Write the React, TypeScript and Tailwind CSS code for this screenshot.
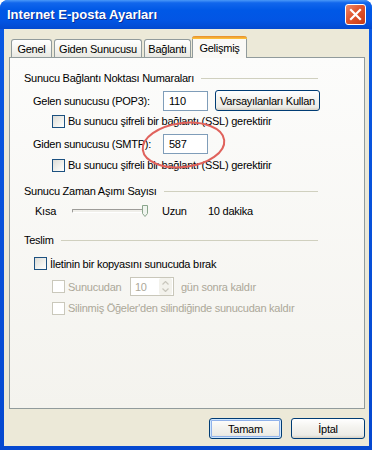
import React from "react";

function Checkbox({ disabled = false }: { disabled?: boolean }) {
  return (
    <div
      className={
        disabled
          ? "w-[13px] h-[13px] shrink-0 border border-[#CAC8BB] bg-white"
          : "w-[13px] h-[13px] shrink-0 border border-[#1C5180] bg-[linear-gradient(135deg,#DCDCD7_0%,#F2F2EE_60%,#FFFFFF_100%)]"
      }
    />
  );
}

function Header({ text }: { text: string }) {
  return (
    <div className="flex items-center h-[14px] w-[294px] gap-[7px]">
      <span className="whitespace-nowrap">{text}</span>
      <div className="flex-1 h-px bg-[#D0D0BF]" />
    </div>
  );
}

function Tab({ label, selected = false, w }: { label: string; selected?: boolean; w: string }) {
  if (selected) {
    return (
      <div
        className={`${w} h-[22px] -mx-[1px] relative bg-[#FAF9F6] border-x border-[#919B9C] rounded-t-[3px] flex justify-center pt-[3px]`}
      >
        <div className="absolute left-[-1px] right-[-1px] top-0 h-[3px] rounded-t-[3px] bg-[linear-gradient(to_bottom,#E68B2C,#FFC73C)]" />
        <span className="mt-[2px]">{label}</span>
      </div>
    );
  }
  return (
    <div
      className={`${w} h-[18px] mb-[1px] border border-b-0 border-[#919B9C] rounded-t-[3px] bg-[linear-gradient(to_bottom,#FFFFFF,#F3F3EF_60%,#E9E8E2)] flex items-center justify-center pt-[1px]`}
    >
      {label}
    </div>
  );
}

function XPButton({ label, def = false, w, className = "" }: { label: string; def?: boolean; w: string; className?: string }) {
  return (
    <div
      className={`${w} h-[21px] rounded-[3px] border border-[#003C74] bg-[linear-gradient(to_bottom,#FFFFFF_0%,#F5F4F0_40%,#ECEBE6_85%,#D6D0C5_100%)] flex items-center justify-center ${
        def ? "shadow-[inset_0_0_0_1px_#CEE7FF,inset_0_0_0_2px_#91B2EA]" : ""
      } ${className}`}
    >
      {label}
    </div>
  );
}

export default function App() {
  return (
    <div className="relative w-[372px] h-[450px] overflow-hidden bg-white font-['Liberation_Sans','Noto_Sans',sans-serif] text-[11px] tracking-[-0.25px] text-black leading-[14px]">
      <div className="w-[372px] h-[450px] rounded-t-[8px] bg-[linear-gradient(to_bottom,#0A5AE4,#0548D0)] flex flex-col">
        {/* Title bar */}
        <div className="h-[29px] shrink-0 rounded-t-[8px] bg-[linear-gradient(to_bottom,#4A98F8_0%,#1166EC_10%,#0058E6_35%,#0255E4_70%,#0349D0_100%)] flex items-center justify-between pl-[7px] pr-[6px]">
          <span className="text-white font-bold text-[13px] tracking-normal font-['Liberation_Sans',sans-serif] [text-shadow:1px_1px_0_#0B2E96] mt-[1px]">
            Internet E-posta Ayarları
          </span>
          <div className="w-[21px] h-[21px] rounded-[3px] border border-white bg-[linear-gradient(135deg,#EE8A6C_0%,#E0552E_45%,#C63A16_100%)] flex items-center justify-center">
            <svg width="13" height="13" viewBox="0 0 13 13">
              <path d="M2 2 L11 11 M11 2 L2 11" stroke="#FFFFFF" strokeWidth="2.2" strokeLinecap="square" />
            </svg>
          </div>
        </div>

        {/* Body */}
        <div className="flex-1 ml-[4px] mr-[3px] mb-[4px] bg-[#ECE9D8] flex flex-col pt-[7px] pl-[5px] pr-[4px]">
          {/* Tabs */}
          <div className="flex items-end h-[22px] -mb-[1px] relative z-10 pl-[2px] gap-[2px]">
            <Tab label="Genel" w="w-[41px]" />
            <Tab label="Giden Sunucusu" w="w-[88px]" />
            <Tab label="Bağlantı" w="w-[47px]" />
            <Tab label="Gelişmiş" w="w-[55px]" selected />
          </div>

          {/* Panel */}
          <div className="h-[352px] border border-[#919B9C] bg-[linear-gradient(to_bottom,#FCFCFB,#F4F3EE)] flex flex-col pl-[14px]">
            <div className="mt-[13px]">
              <Header text="Sunucu Bağlantı Noktası Numaraları" />
            </div>

            <div className="mt-[5px] h-[21px] flex items-center pl-[9px]">
              <span className="w-[130px]">Gelen sunucusu (POP3):</span>
              <div className="w-[45px] h-[20px] border border-[#7F9DB9] bg-white flex items-center pl-[5px]">110</div>
              <XPButton label="Varsayılanları Kullan" w="w-[105px]" className="ml-[7px]" />
            </div>

            <div className="mt-[3px] h-[14px] flex items-center pl-[28px] gap-[3px]">
              <Checkbox />
              <span>Bu sunucu şifreli bir bağlantı (SSL) gerektirir</span>
            </div>

            <div className="mt-[5px] h-[21px] flex items-center pl-[9px]">
              <span className="w-[130px]">Giden sunucusu (SMTP):</span>
              <div className="w-[45px] h-[20px] border border-[#7F9DB9] bg-white flex items-center pl-[5px]">587</div>
            </div>

            <div className="mt-[4px] h-[14px] flex items-center pl-[28px] gap-[3px]">
              <Checkbox />
              <span>Bu sunucu şifreli bir bağlantı (SSL) gerektirir</span>
            </div>

            <div className="mt-[12px]">
              <Header text="Sunucu Zaman Aşımı Sayısı" />
            </div>

            <div className="mt-[5px] h-[16px] flex items-center pl-[11px]">
              <span className="w-[37px]">Kısa</span>
              <div className="w-[76px] h-[12px] flex items-center">
                <div className="w-[71px] h-[4px] border border-[#9D9C99] border-b-[#FFFFFF] border-r-[#FFFFFF] bg-[#F0EFEA] rounded-[1px]" />
                <svg width="6" height="12" viewBox="0 0 6 12" className="-ml-[1px]">
                  <path d="M0.5 0.5 H5.5 V8.5 L3 11.5 L0.5 8.5 Z" fill="#EFF4EE" stroke="#8AA58C" strokeWidth="1" />
                </svg>
              </div>
              <span className="ml-[14px] w-[46px]">Uzun</span>
              <span>10 dakika</span>
            </div>

            <div className="mt-[14px]">
              <Header text="Teslim" />
            </div>

            <div className="mt-[10px] h-[13px] flex items-center pl-[10px] gap-[3px]">
              <Checkbox />
              <span>İletinin bir kopyasını sunucuda bırak</span>
            </div>

            <div className="mt-[7px] h-[19px] flex items-center pl-[28px] text-[#ACA899]">
              <Checkbox disabled />
              <span className="ml-[3px] w-[62px]">Sunucudan</span>
              <div className="w-[44px] h-[19px] border border-[#C9C7BA] bg-white flex items-center">
                <span className="pl-[4px] flex-1">10</span>
                <div className="w-[13px] h-[17px] mr-[1px] bg-[#F3F2EC] rounded-[2px] flex flex-col items-center justify-center gap-[3px]">
                  <svg width="7" height="4" viewBox="0 0 7 4">
                    <path d="M0.5 3.5 L3.5 0.5 L6.5 3.5" fill="none" stroke="#C8C6BC" strokeWidth="1.2" />
                  </svg>
                  <svg width="7" height="4" viewBox="0 0 7 4">
                    <path d="M0.5 0.5 L3.5 3.5 L6.5 0.5" fill="none" stroke="#C8C6BC" strokeWidth="1.2" />
                  </svg>
                </div>
              </div>
              <span className="ml-[7px]">gün sonra kaldır</span>
            </div>

            <div className="mt-[5px] h-[14px] flex items-center pl-[28px] gap-[3px] text-[#ACA899]">
              <Checkbox disabled />
              <span>Silinmiş Öğeler'den silindiğinde sunucudan kaldır</span>
            </div>
          </div>

          {/* Buttons */}
          <div className="mt-[9px] flex justify-end gap-[9px] pr-[0px]">
            <XPButton label="Tamam" w="w-[73px]" def />
            <XPButton label="İptal" w="w-[74px]" />
          </div>
        </div>
      </div>

      {/* Red annotation ellipse */}
      <svg className="absolute left-[136px] top-[116px] pointer-events-none" width="96" height="58" viewBox="0 0 96 58">
        <ellipse cx="47.5" cy="29" rx="41" ry="22" transform="rotate(-7 47.5 29)" fill="none" stroke="#E0625C" strokeWidth="2" />
      </svg>
    </div>
  );
}
